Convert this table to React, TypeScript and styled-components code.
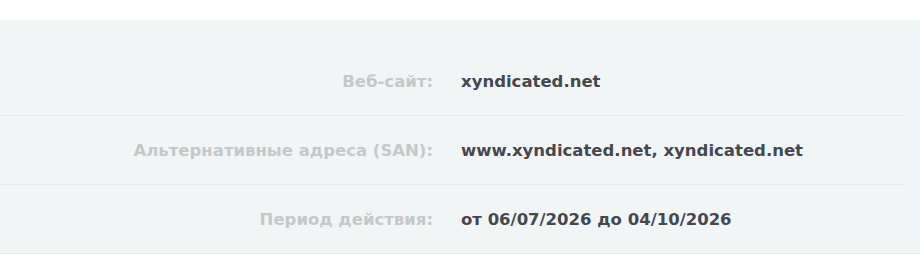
import styled, { createGlobalStyle } from "styled-components";

const GlobalStyle = createGlobalStyle`
  html, body {
    margin: 0;
    padding: 0;
    background: #ffffff;
  }
  body {
    font-family: "DejaVu Sans", "Open Sans", sans-serif;
  }
`;

const Page = styled.div`
  padding-top: 20px;
  width: 920px;
`;

const Panel = styled.section`
  background: #f2f5f6;
  padding-top: 27px;
  border-bottom: 1px solid #e8ebec;
`;

const Table = styled.div`
  width: 905px;
`;

const Row = styled.div<{ $last?: boolean }>`
  display: grid;
  grid-template-columns: 433px 1fr;
  align-items: center;
  height: 68px;
  border-bottom: ${(p) => (p.$last ? "none" : "1px solid #e6e9ea")};
  font-size: 16.5px;
  font-weight: 700;
`;

const Label = styled.div`
  text-align: right;
  color: #c4c8cb;
`;

const Value = styled.div`
  padding-left: 28px;
  color: #45484f;
`;

const rows = [
  { label: "Веб-сайт:", value: "xyndicated.net" },
  { label: "Альтернативные адреса (SAN):", value: "www.xyndicated.net, xyndicated.net" },
  { label: "Период действия:", value: "от 06/07/2026 до 04/10/2026" },
];

const App = () => {
  return (
    <>
      <GlobalStyle />
      <Page>
        <Panel>
          <Table>
            {rows.map((r, i) => (
              <Row key={r.label} $last={i === rows.length - 1}>
                <Label>{r.label}</Label>
                <Value>{r.value}</Value>
              </Row>
            ))}
          </Table>
        </Panel>
      </Page>
    </>
  );
};

export default App;
